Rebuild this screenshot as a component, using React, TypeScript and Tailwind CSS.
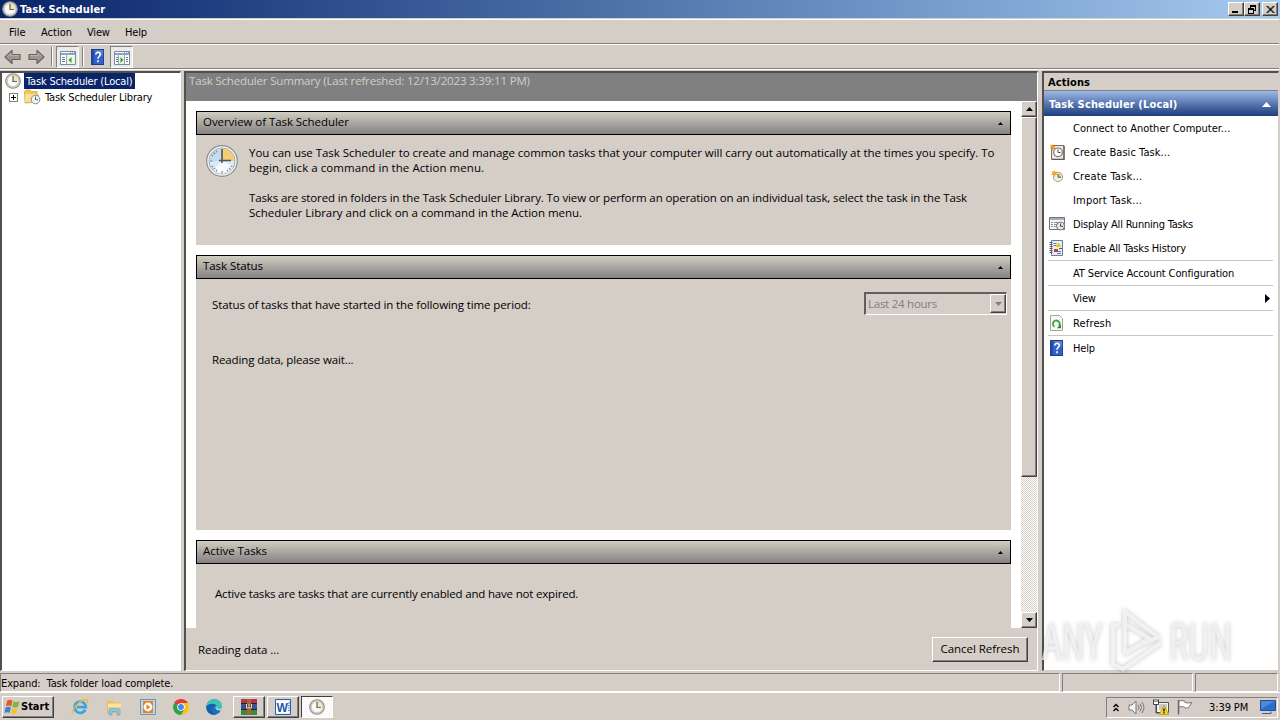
import type {ReactNode} from 'react'
import clsx from 'clsx'

const RAISED = 'border border-t-white border-l-white border-r-[#404040] border-b-[#404040] bg-[#d4cec7] shadow-[inset_-1px_-1px_0_#808080]'
const SUNKEN = 'border border-t-[#808080] border-r-white border-b-white border-l-[#808080]'
const UI_FONT = "font-['DejaVu_Sans_Condensed','DejaVu_Sans',sans-serif] [font-stretch:condensed]"
const PANEL_FONT = "font-['Open_Sans','Noto_Sans',sans-serif] [font-stretch:normal]"

const Clock = ({size = 16}: {size?: number}) => (
    <svg width={size} height={size} viewBox="0 0 32 32" className="shrink-0">
        <circle cx="16" cy="16" r="15.3" fill="#f4f4f2" stroke="#8b8d90" strokeWidth="1.2"/>
        <circle cx="16" cy="16" r="13" fill="#dcebf5" stroke="#9aa9b5" strokeWidth="1"/>
        <path d="M3.5 17a12.5 12.5 0 0 1 12-13.5V16z" fill="#c3dcee"/>
        <path d="M16 16 27 22a12.5 12.5 0 0 1-20 3z" fill="#f8fbfd"/>
        <path d="M16 16V3.6A12.4 12.4 0 0 1 28.4 16z" fill="#f5cc72"/>
        <path d="M16 26v2.5M4 16h2.5M7.5 7.5l1.7 1.7M7.5 24.5l1.7-1.7M24.5 24.5l-1.7-1.7M10 5.5l1 1.8M5.5 10l1.8 1M5.5 22l1.8-1M10 26.5l1-1.8M22 26.5l-1-1.8M26.5 22l-1.8-1" stroke="#7b8fa0" strokeWidth="1.2"/>
        <path d="M16 4v14M13 15.5h12" stroke="#4c545c" strokeWidth="1.6"/>
    </svg>
)

const SmallClock = () => (
    <svg width="16" height="16" viewBox="0 0 16 16" className="shrink-0">
        <circle cx="8" cy="8" r="7.3" fill="#dedad2" stroke="#8f8d89" strokeWidth="1.1"/>
        <circle cx="8" cy="8" r="5.7" fill="#f8f8f6" stroke="#b9b6b0" strokeWidth=".7"/>
        <path d="M8 8V2.6A5.4 5.4 0 0 1 13.4 8z" fill="#f5e3b4"/>
        <path d="M8 3v5.5h4" fill="none" stroke="#66625c" strokeWidth="1.2"/>
    </svg>
)

const FolderClock = () => (
    <svg width="17" height="16" viewBox="0 0 17 16" className="shrink-0">
        <path d="M.5 2.5 2 1h4l1.5 1.5H13v3L14.5 6v7L1 14z" fill="#f0c75a" stroke="#d2a540" strokeWidth=".8"/>
        <path d="M1 5h12v8H1z" fill="#fae093"/>
        <circle cx="11.5" cy="10.5" r="4.3" fill="#f1f3f4" stroke="#8a8a8a" strokeWidth="1"/>
        <path d="M11.5 7.5v3.3H14" fill="none" stroke="#666" strokeWidth="1"/>
    </svg>
)

const Help = () => (
    <svg width="13" height="16" viewBox="0 0 14 16" preserveAspectRatio="none" className="shrink-0">
        <rect x=".5" y=".5" width="13" height="15" fill="#3263c8" stroke="#1c3c8c"/>
        <path d="M1 1h2v14H1z" fill="#234a9e"/>
        <path d="M3 1h10v6z" fill="#5680d8"/>
        <path d="M5.2 5.4C5.2 2.6 10 2.6 10 5.4c0 2-2.5 2-2.5 4.3M7.5 11.3v1.9" fill="none" stroke="#fff" strokeWidth="1.7"/>
    </svg>
)

const PaneIcon = ({right = false}: {right?: boolean}) => (
    <svg width="16" height="14" viewBox="0 0 16 14">
        <path d="M.5.5h15v13H.5z" fill="#fff" stroke="#7889a5"/>
        <path d="M1 1h14v3H1z" fill="#8ea2c2"/>
        <path d="M1 1.5h9M11 1.5h1M13 1.5h1" stroke="#fff"/>
        {right ? (
            <>
                <path d="M2 6.5h2M2 8.5h2M2 10.5h2M12 6.5h2M12 8.5h2M12 10.5h2" stroke="#5f779f"/>
                <path d="M4.5 4v9M10.5 4v9" stroke="#94a3b8"/>
                <path d="M5 5h5v8H5z" fill="#e9f6e6"/>
                <path d="m6.5 6 3 3-3 3z" fill="#3aa034"/>
            </>
        ) : (
            <>
                <path d="M2 6.5h3M2 8.5h3M2 10.5h3" stroke="#5f779f"/>
                <path d="M6.5 4v9" stroke="#94a3b8"/>
                <path d="M7 5h8v8H7z" fill="#e9f6e6"/>
                <path d="m11.5 6-3 3 3 3z" fill="#3aa034"/>
            </>
        )}
    </svg>
)

const Arrow = ({forward = false}: {forward?: boolean}) => (
    <svg width="17" height="16" viewBox="0 0 17 16" className={clsx(forward && '-scale-x-100')}>
        <path d="M1 8 8 1.5v4h8v5H8v4z" fill="#9b9894" stroke="#656360" strokeWidth="1.2" strokeLinejoin="round"/>
        <path d="M3 7.5 7 4v2.5h8" fill="none" stroke="#b8b5b0"/>
    </svg>
)

const BasicTask = () => (
    <svg width="16" height="16" viewBox="0 0 16 16">
        <path d="M2.5 1.5H15v14H2.5z" fill="#efe9e3" stroke="#7e6c65"/>
        <path d="M15 2v13.5H3" stroke="#645a56" strokeWidth="1.3" fill="none"/>
        <circle cx="9" cy="8.3" r="4.3" fill="#fff" stroke="#71767c" strokeWidth="1.2"/>
        <path d="M9 5.5v3h2.5" fill="none" stroke="#444"/>
        <path d="m3.5 0 1 2.3L7 1.5 5.5 3.7 7 6 4.5 5 3 7 2.5 4.5 0 4l2.3-1L1 .5l2 1z" fill="#f19a23"/>
    </svg>
)

const NewTask = () => (
    <svg width="16" height="16" viewBox="0 0 16 16">
        <circle cx="9" cy="9" r="4.5" fill="#f1eee9" stroke="#a5a09a" strokeWidth="1.1"/>
        <path d="M9 9V5.5A3.5 3.5 0 0 1 12.5 9z" fill="#eccd72"/>
        <path d="M9 6v3.2h3" fill="none" stroke="#55504a"/>
        <path d="m5.5 2 .8 2 2.2-.7L7.3 5.5 9 7l-2.5-.2L5.5 9l-.8-2.2L2 7l1.5-1.7L2.5 3l2.2.8z" fill="#f0a524"/>
    </svg>
)

const RunningTasks = () => (
    <svg width="16" height="14" viewBox="0 0 16 14">
        <path d="M.5.5h15v12H.5z" fill="#f8f8f8" stroke="#6f757d"/>
        <path d="M1 1h14v2H1z" fill="#a6adb6"/>
        <path d="M2 5.5h2M5 5.5h5M2 7.5h2M5 7.5h3M2 9.5h2M5 9.5h2" stroke="#87909b"/>
        <circle cx="11.5" cy="9" r="4" fill="#e5eaee" stroke="#6e747b"/>
        <path d="M11.5 6.5v2.8H14" fill="none" stroke="#444"/>
    </svg>
)

const HistoryIcon = () => (
    <svg width="14" height="16" viewBox="0 0 14 16">
        <path d="M2.5.5h11v15h-11z" fill="#e9edf5" stroke="#6c7a9a"/>
        <path d="M.5 2.5h3M.5 4.5h3M.5 6.5h3M.5 8.5h3M.5 10.5h3M.5 12.5h3" stroke="#56585e"/>
        <path d="M4.5 3.5h3M4.5 5.5h3M8 11.5h4M8 13.5h4" stroke="#65789e"/>
        <path d="m9.5 2.5 3 4.5h-6z" fill="#f0c21f"/>
        <path d="M5 9h4v3H5z" fill="#b54434"/>
        <path d="M10 8.5h3" stroke="#355ba8"/>
    </svg>
)

const RefreshIcon = () => (
    <svg width="14" height="16" viewBox="0 0 14 16">
        <path d="M1.5.5h9l3 3v12h-12z" fill="#f5f8f4" stroke="#9da79d"/>
        <path d="M5.5 11.8A3.4 3.4 0 1 1 10 11" fill="none" stroke="#43a047" strokeWidth="1.8"/>
        <path d="M12 9v4.2H7.8z" fill="#2e8b35"/>
    </svg>
)

const ACTIONS: {label: string; icon?: ReactNode; line?: boolean; sub?: boolean; css?: string}[] = [
    {label: 'Connect to Another Computer...'},
    {label: 'Create Basic Task...', icon: <BasicTask/>, css: 'tracking-[0.06px]'},
    {label: 'Create Task...', icon: <NewTask/>, css: 'tracking-[0.2px]'},
    {label: 'Import Task...', css: 'tracking-[0.18px]'},
    {label: 'Display All Running Tasks', icon: <RunningTasks/>, css: 'tracking-[-0.2px]'},
    {label: 'Enable All Tasks History', icon: <HistoryIcon/>, css: 'tracking-[-0.17px]'},
    {label: 'AT Service Account Configuration', line: true, css: 'tracking-[-0.12px]'},
    {label: 'View', line: true, sub: true, css: 'tracking-[-0.2px]'},
    {label: 'Refresh', icon: <RefreshIcon/>, line: true, css: 'tracking-[0.15px]'},
    {label: 'Help', icon: <div className="pl-px"><Help/></div>, line: true, css: 'tracking-[-0.2px]'},
]

const WINDOW_BUTTONS = [
    'M2 8.5h6M2 7.5h6',
    'M4 2.5h6M4 1.5h6M4.5 2v2M9.5 2v5M8 6.5h2M2 5.5h6M2 4.5h6M2.5 5v5M7.5 5v5M2 9.5h6',
    'm2.5 2 7 7M9.5 2l-7 7M3.5 2l7 7M10.5 2l-7 7',
]

const TitleBar = () => (
    <div className="flex h-[18px] items-center bg-linear-to-r from-[#0a246a] to-[#a6caf0] pr-[2px] pl-[2px]">
        <SmallClock/>
        <span className="ml-[2px] grow pt-px text-[11px] leading-[18px] font-bold tracking-[0.1px] text-white">Task Scheduler</span>
        {WINDOW_BUTTONS.map((d, i) => (
            <div key={d} className={clsx('flex h-[14px] w-4 items-center justify-center', RAISED, i === 2 && 'ml-[2px]')}>
                <svg width="12" height="11" viewBox="0 0 12 11" className="shrink-0" shapeRendering={i === 2 ? 'auto' : 'crispEdges'}>
                    <path d={d} fill="none" stroke="#000" strokeWidth="1"/>
                </svg>
            </div>
        ))}
    </div>
)

const MenuBar = () => (
    <div className="mt-px mr-px flex h-[25px] items-center border-t border-b border-t-white border-b-[#808080] pt-[3px] pl-[9px] leading-4">
        <span className="w-[32px]">File</span>
        <span className="w-[46px]">Action</span>
        <span className="w-[38px] tracking-[-0.2px]">View</span>
        <span className="tracking-[-0.2px]">Help</span>
    </div>
)

const Toolbar = () => (
    <div className="flex h-[24px] items-center border-b border-[#808080] pl-1">
        <Arrow/>
        <div className="ml-[7px] flex"><Arrow forward/></div>
        <div className="ml-[6px] h-[19px] w-[2px] border-r border-white bg-[#808080]"/>
        <div className={clsx('ml-[3px] flex h-[22px] w-[23px] items-center justify-center bg-[#eceae6] pt-[2px]', SUNKEN)}>
            <PaneIcon/>
        </div>
        <div className="ml-[3px] h-[19px] w-[2px] border-r border-white bg-[#808080]"/>
        <div className="ml-[7px]"><Help/></div>
        <div className={clsx('ml-[6px] flex h-[22px] w-[23px] items-center justify-center bg-[#eceae6] pt-[2px]', SUNKEN)}>
            <PaneIcon right/>
        </div>
    </div>
)

const Tree = () => (
    <div className="w-[181px] shrink-0 border-t-2 border-r border-b border-l-2 border-t-[#505050] border-r-white border-b-white border-l-[#505050] bg-white">
        <div className="flex h-4 items-center pl-[3px]">
            <SmallClock/>
            <span className="ml-[3px] h-4 w-[111px] bg-[#0a246a] pl-[2px] text-[11px] leading-[17px] tracking-[-0.18px] whitespace-nowrap text-white">Task Scheduler (Local)</span>
        </div>
        <div className="flex h-4 items-center pl-[7px]">
            <svg width="9" height="9" viewBox="0 0 9 9" shapeRendering="crispEdges">
                <path d="M.5.5h8v8h-8z" fill="#fff" stroke="#808080"/>
                <path d="M2 4.5h5M4.5 2v5" stroke="#000"/>
            </svg>
            <div className="ml-[6px]"><FolderClock/></div>
            <span className="ml-[4px] pt-[2px] text-[11px] leading-4 tracking-[-0.2px] whitespace-nowrap">Task Scheduler Library</span>
        </div>
    </div>
)

const Section = ({title, css, children}: {title: string; css: string; children: ReactNode}) => (
    <section className={clsx('shrink-0 bg-[#d4cec7]', css)}>
        <div className="flex h-6 items-center justify-between border border-black bg-linear-to-b from-[#d0cec2] to-[#858182] pr-[7px] pl-[6px]">
            <span className="pb-[4px]">{title}</span>
            <svg width="5" height="3" viewBox="0 0 5 3" className="mt-px"><path d="M0 3 2.5 0 5 3z"/></svg>
        </div>
        {children}
    </section>
)

const Scrollbar = () => (
    <div className="flex w-4 shrink-0 flex-col bg-[repeating-conic-gradient(#fff_0_25%,#d4cec7_0_50%)] bg-size-[2px_2px]">
        <div className={clsx('flex h-4 items-center justify-center', RAISED)}>
            <svg width="7" height="4" viewBox="0 0 7 4"><path d="M0 4 3.5 0 7 4z"/></svg>
        </div>
        <div className={clsx('h-[360px]', RAISED)}/>
        <div className={clsx('mt-auto flex h-4 items-center justify-center', RAISED)}>
            <svg width="7" height="4" viewBox="0 0 7 4"><path d="M0 0h7L3.5 4z"/></svg>
        </div>
    </div>
)

const Summary = () => (
    <div className={clsx('ml-[3px] flex w-[854px] shrink-0 flex-col border-t-2 border-r border-b border-l-2 border-t-[#505050] border-r-white border-b-white border-l-[#505050] text-[11.5px] leading-[15px] tracking-[-0.06px]', PANEL_FONT)}>
        <div className="h-[28px] bg-[#808080] pl-[3px] tracking-[-0.17px] text-[#d4cec7]">Task Scheduler Summary (Last refreshed: 12/13/2023 3:39:11 PM)</div>
        <div className="flex h-[527px] overflow-hidden bg-white">
            <div className="flex min-w-0 grow flex-col gap-[10px] pt-[10px] pr-[10px] pl-[10px]">
                <Section title="Overview of Task Scheduler" css="h-[134px]">
                    <div className="flex pt-[10px] pl-[10px] whitespace-nowrap">
                        <Clock size={32}/>
                        <div className="ml-[11px]">
                            <p className="tracking-[-0.05px]">You can use Task Scheduler to create and manage common tasks that your computer will carry out automatically at the times you specify. To</p>
                            <p className="tracking-[0.06px]">begin, click a command in the Action menu.</p>
                            <p className="mt-[15px] tracking-[-0.125px]">Tasks are stored in folders in the Task Scheduler Library. To view or perform an operation on an individual task, select the task in the Task</p>
                            <p className="tracking-[-0.02px]">Scheduler Library and click on a command in the Action menu.</p>
                        </div>
                    </div>
                </Section>
                <Section title="Task Status" css="h-[275px]">
                    <div className="flex items-start justify-between pt-[13px] pr-[4px] pl-[16px]">
                        <span className="mt-[5px] tracking-[-0.11px]">Status of tasks that have started in the following time period:</span>
                        <div className="flex h-[23px] w-[143px] justify-between border-t-2 border-r border-b border-l-2 border-t-[#606060] border-r-white border-b-white border-l-[#606060] pl-[2px] text-[#808080]">
                            <span className="pt-[2px] tracking-[-0.25px]">Last 24 hours</span>
                            <div className={clsx('flex h-[19px] w-4 items-center justify-center', RAISED)}>
                                <svg width="7" height="4" viewBox="0 0 7 4"><path d="M0 0h7L3.5 4z" fill="#808080"/></svg>
                            </div>
                        </div>
                    </div>
                    <p className="mt-[37px] pl-[16px] tracking-[-0.13px]">Reading data, please wait...</p>
                </Section>
                <Section title="Active Tasks" css="h-[120px]">
                    <p className="pt-[22px] pl-[19px] tracking-[-0.18px]">Active tasks are tasks that are currently enabled and have not expired.</p>
                </Section>
            </div>
            <Scrollbar/>
        </div>
        <div className="flex grow items-center justify-between pr-[9px] pl-[12px]">
            <span>Reading data ...</span>
            <button className={clsx('h-[25px] w-[96px] pb-[2px] whitespace-nowrap', RAISED)}>Cancel Refresh</button>
        </div>
    </div>
)

const Actions = () => (
    <div className="ml-[4px] flex grow flex-col border-t-2 border-r border-b border-l-2 border-t-[#505050] border-r-[#d4cec7] border-b-[#d4cec7] border-l-[#505050] bg-white">
        <div className="h-[18px] border-b border-[#808080] bg-[#d4cec7] pl-[4px] text-[11px] leading-[19px] font-bold tracking-[0.1px]">Actions</div>
        <div className="flex h-[25px] items-center justify-between bg-linear-to-b from-[#9db9e8] to-[#1d3c7d] pt-px pr-[7px] pl-[5px] text-[11px] font-bold tracking-[0.14px] text-white">
            <span className="pt-[2px]">Task Scheduler (Local)</span>
            <svg width="9" height="5" viewBox="0 0 9 5"><path d="M0 5 4.5 0 9 5z" fill="#fff"/></svg>
        </div>
        {ACTIONS.map(({label, icon, line, sub, css}) => (
            <div key={label} className="pr-[5px] pl-[4px]">
                {line && <div className="h-px bg-[#c8c5c0]"/>}
                <div className="flex h-6 items-center">
                    <div className="flex w-[25px] pl-px">{icon}</div>
                    <span className={clsx('grow pt-[2px] text-[11px] leading-4', css)}>{label}</span>
                    {sub && <svg width="5" height="9" viewBox="0 0 5 9" className="mr-[3px]"><path d="M0 0v9l5-4.5z"/></svg>}
                </div>
            </div>
        ))}
    </div>
)

const StatusBar = () => (
    <div className="mt-[2px] flex h-[19px] gap-[2px] text-[11px] leading-[19px]">
        <div className={clsx('w-[1060px] tracking-[-0.12px]', SUNKEN)}>Expand:&nbsp; Task folder load complete.</div>
        <div className={clsx('w-[131px]', SUNKEN)}/>
        <div className={clsx('mr-[2px] grow', SUNKEN)}/>
    </div>
)

const WindowsFlag = () => (
    <svg width="17" height="16" viewBox="0 0 16 15">
        <path d="M3 1.5Q5.5 0 8 1.5L6.8 6.8Q4.3 5.5 1.8 6.8z" fill="#e2582b"/>
        <path d="M9 2q2.5 1.5 5.5 0l-1.3 5.3q-2.5 1.3-5.4 0z" fill="#79b843"/>
        <path d="M1.5 8Q4 6.7 6.5 8l-1.3 5Q3 12 .3 13z" fill="#3b83d0"/>
        <path d="M7.5 8.5q2.8 1.3 5.4 0l-1.3 5q-2.6 1.3-5.4 0z" fill="#f3c13a"/>
    </svg>
)

const Explorer = () => (
    <svg width="17" height="17" viewBox="0 0 17 17">
        <path d="M1 2h6l1 1.5h7V14H1z" fill="#e8c35d"/>
        <path d="M2 4.5h13V12H2z" fill="#f9e6a4"/>
        <path d="M2 8h13v4H2z" fill="#f3d279"/>
        <path d="M3 16v-4.5Q3 9.5 5 9.5h7q2 0 2 2V16h-3v-3.5H6V16z" fill="#8fc6e2" stroke="#5c9fc5" strokeWidth=".6"/>
    </svg>
)

const InternetExplorer = () => (
    <svg width="18" height="18" viewBox="0 0 17 17">
        <path d="M13.5 11A5.3 5.3 0 1 1 14 8.7H5.5" fill="none" stroke="#39a6dd" strokeWidth="2.6"/>
        <path d="M1.5 15.5C-1 12 9.5.5 15 1.5q1.5.8.3 3.5" fill="none" stroke="#edb83a" strokeWidth="1.2"/>
    </svg>
)

const MediaPlayer = () => (
    <svg width="16" height="16" viewBox="0 0 16 16">
        <path d="M.5.5h15v15H.5z" fill="#b7d7ed" stroke="#5a9bc9"/>
        <path d="M3 2h10v12H3z" fill="#f07f17"/>
        <circle cx="8" cy="8" r="4.4" fill="#fff"/>
        <path d="m6.5 5.2 4 2.8-4 2.8z" fill="#f07f17"/>
    </svg>
)

const Chrome = () => (
    <svg width="16" height="16" viewBox="0 0 16 16">
        <path d="M8 8 1.1 4A8 8 0 0 1 14.9 4z" fill="#e33b2e"/>
        <path d="M8 8h-.1L1.1 4A8 8 0 0 0 8 16l4-6z" fill="#2da04c"/>
        <path d="M8 16A8 8 0 0 0 14.9 4H8l3.6 6z" fill="#fbc116"/>
        <circle cx="8" cy="8" r="3.8" fill="#fff"/>
        <circle cx="8" cy="8" r="2.9" fill="#4285f4"/>
    </svg>
)

const Edge = () => (
    <svg width="17" height="16" viewBox="0 0 17 16">
        <circle cx="8" cy="8" r="7.7" fill="#1673c4"/>
        <path d="M.5 7C1.5 2 5 .3 8.5.3c4.5 0 7.5 3 7.5 6.2 0 3-2.8 4-5.5 3.3C12 6 7 3.5.5 7z" fill="#3bc6b4"/>
        <path d="M.5 7C4 3.7 9.5 4 10.8 7.3 8.5 5.8 6 7.5 6 10c0 3 2 5 4.5 5.3C5 17-.5 13 .5 7z" fill="#1a5fae"/>
        <path d="M10.5 7c-2 .5-1.5 5 4.7 4.5l1.8-3-4 1.5q-3 0-2.5-3z" fill="#d4cec7"/>
    </svg>
)

const WinRar = () => (
    <svg width="18" height="16" viewBox="0 0 18 16" className="shrink-0">
        <path d="M1 0h16v5H1z" fill="#b3324c"/>
        <path d="M1 5h16v5H1z" fill="#3354a8"/>
        <path d="M1 10h16v6H1z" fill="#3d8a3d"/>
        <path d="M1 4.5h16M1 10.5h16" stroke="#2a2230"/>
        <path d="M7 0h4v16H7z" fill="#a1663b"/>
        <path d="M5 5.5h8V10H5z" fill="#54382a"/>
        <path d="M6.5 5v4h5V5M9 5v4" fill="none" stroke="#e9dcc0" strokeWidth="1.1"/>
    </svg>
)

const Word = () => (
    <svg width="16" height="16" viewBox="0 0 16 16">
        <path d="M.5.5h15v15H.5z" fill="#eaf1fb" stroke="#2b5fad"/>
        <path d="M13 4h2M13 6.5h2M13 9h2M13 11.5h2" stroke="#5c88c8"/>
        <path d="M1 2h11.5v12H1z" fill="#fff"/>
        <text x="7.2" y="12.5" textAnchor="middle" fontFamily="Liberation Sans" fontWeight="bold" fontSize="12" fill="#2358a6">W</text>
    </svg>
)

const Tray = () => (
    <div className={clsx('ml-auto flex h-[21px] w-[172px] items-center pl-[6px]', SUNKEN)}>
        <svg width="6" height="9" viewBox="0 0 6 9"><path d="m.5 4 2.5-2.5L5.5 4M.5 8 3 5.5 5.5 8" fill="none" stroke="#000" strokeWidth="1.4"/></svg>
        <svg width="17" height="15" viewBox="0 0 17 15" className="ml-[9px]">
            <path d="M1 5h3l4-4v13l-4-4H1z" fill="#f6f6f6" stroke="#777"/>
            <path d="M10 5q2 2.5 0 5M12 3.5q3 4 0 8M14 2q4 5.5 0 11" fill="none" stroke="#777"/>
        </svg>
        <svg width="16" height="16" viewBox="0 0 16 16" className="ml-[8px]">
            <path d="M3.5 3.5h12v10h-12z" fill="#f2f2f0" stroke="#555"/>
            <path d="M6 5h8v6H6z" fill="#c9c9c5"/>
            <path d="M.5.5v5h5v-5" fill="#fff" stroke="#444"/>
            <path d="M2 0v3M4 0v3M3 5.5V14h3" fill="none" stroke="#444"/>
            <path d="m11 6.5 4.7 9H6.3z" fill="#f9d71c" stroke="#b18f07" strokeWidth=".7"/>
            <path d="M11 9.5v3M11 13.2v1.3" stroke="#000" strokeWidth="1.3"/>
        </svg>
        <svg width="16" height="16" viewBox="0 0 16 16" className="ml-[8px]">
            <path d="M1.5 1v14.5" stroke="#666" strokeWidth="1.5"/>
            <path d="M2 2q3-1.5 6 .5v1q3 1 7 0-2 3-4 5.5-2.5.5-4-1-2-1-5 0z" fill="#fff" stroke="#777"/>
        </svg>
        <span className="ml-[16px] w-[40px] pt-[2px] text-[11px] tracking-[-0.1px] whitespace-nowrap">3:39 PM</span>
        <svg width="16" height="14" viewBox="0 0 16 14" className="ml-[11px]">
            <path d="M.5.5h15v10H.5z" fill="#2a6fcf" stroke="#24508e"/>
            <path d="M1 1h14L1 9z" fill="#4a8ade"/>
            <path d="M2 13.5h9v-2" stroke="#395d8f" fill="none"/>
        </svg>
    </div>
)

const Taskbar = () => (
    <div className="flex grow items-center border-t border-white pt-px pr-[2px] pl-[2px]">
        <button className={clsx('flex h-[22px] w-[52px] items-center pl-px text-[11px] font-bold', RAISED)}>
            <WindowsFlag/><span className="pt-px">Start</span>
        </button>
        <div className="ml-[17px] flex w-[152px] items-center justify-between">
            <InternetExplorer/>
            <Explorer/>
            <MediaPlayer/>
            <Chrome/>
            <Edge/>
        </div>
        <div className="ml-[10px] flex gap-[2px]">
            <button className={clsx('flex h-[22px] w-8 items-center justify-center', RAISED)}><WinRar/></button>
            <button className={clsx('flex h-[22px] w-8 items-center justify-center', RAISED)}><Word/></button>
            <button className="flex h-[22px] w-8 items-center justify-center border border-t-[#404040] border-r-white border-b-white border-l-[#404040] bg-[#fbfaf9]"><SmallClock/></button>
        </div>
        <Tray/>
    </div>
)

const Watermark = () => (
    <svg width="240" height="80" viewBox="0 0 240 80" className="pointer-events-none absolute top-[606px] left-[1040px] overflow-visible [filter:drop-shadow(0_0_2px_rgba(0,0,0,.28))]">
        <g fill="#f4f4f4" fillOpacity=".75" fontFamily="Roboto" fontSize="51">
            <text x="1" y="54" textLength="62" lengthAdjust="spacingAndGlyphs">ANY</text>
            <text x="129" y="54" textLength="63" lengthAdjust="spacingAndGlyphs">RUN</text>
        </g>
        <path d="M85 6v40l33-15zM73 17v41l10 5 38-26M73 22l6-4M85 18l24 14-24 16" fill="none" stroke="#f6f6f6" strokeOpacity=".85" strokeWidth="4"/>
    </svg>
)

const App = () => (
    <div className={clsx('relative flex h-[720px] w-[1280px] flex-col overflow-hidden bg-[#d4cec7] text-[11px] text-black', UI_FONT)}>
        <TitleBar/>
        <MenuBar/>
        <div className="mr-px h-[26px] border-t border-b border-white"><Toolbar/></div>
        <div className="mt-px flex h-[600px] shrink-0 pr-px">
            <Tree/>
            <Summary/>
            <Actions/>
        </div>
        <StatusBar/>
        <Taskbar/>
        <Watermark/>
    </div>
)

export default App
